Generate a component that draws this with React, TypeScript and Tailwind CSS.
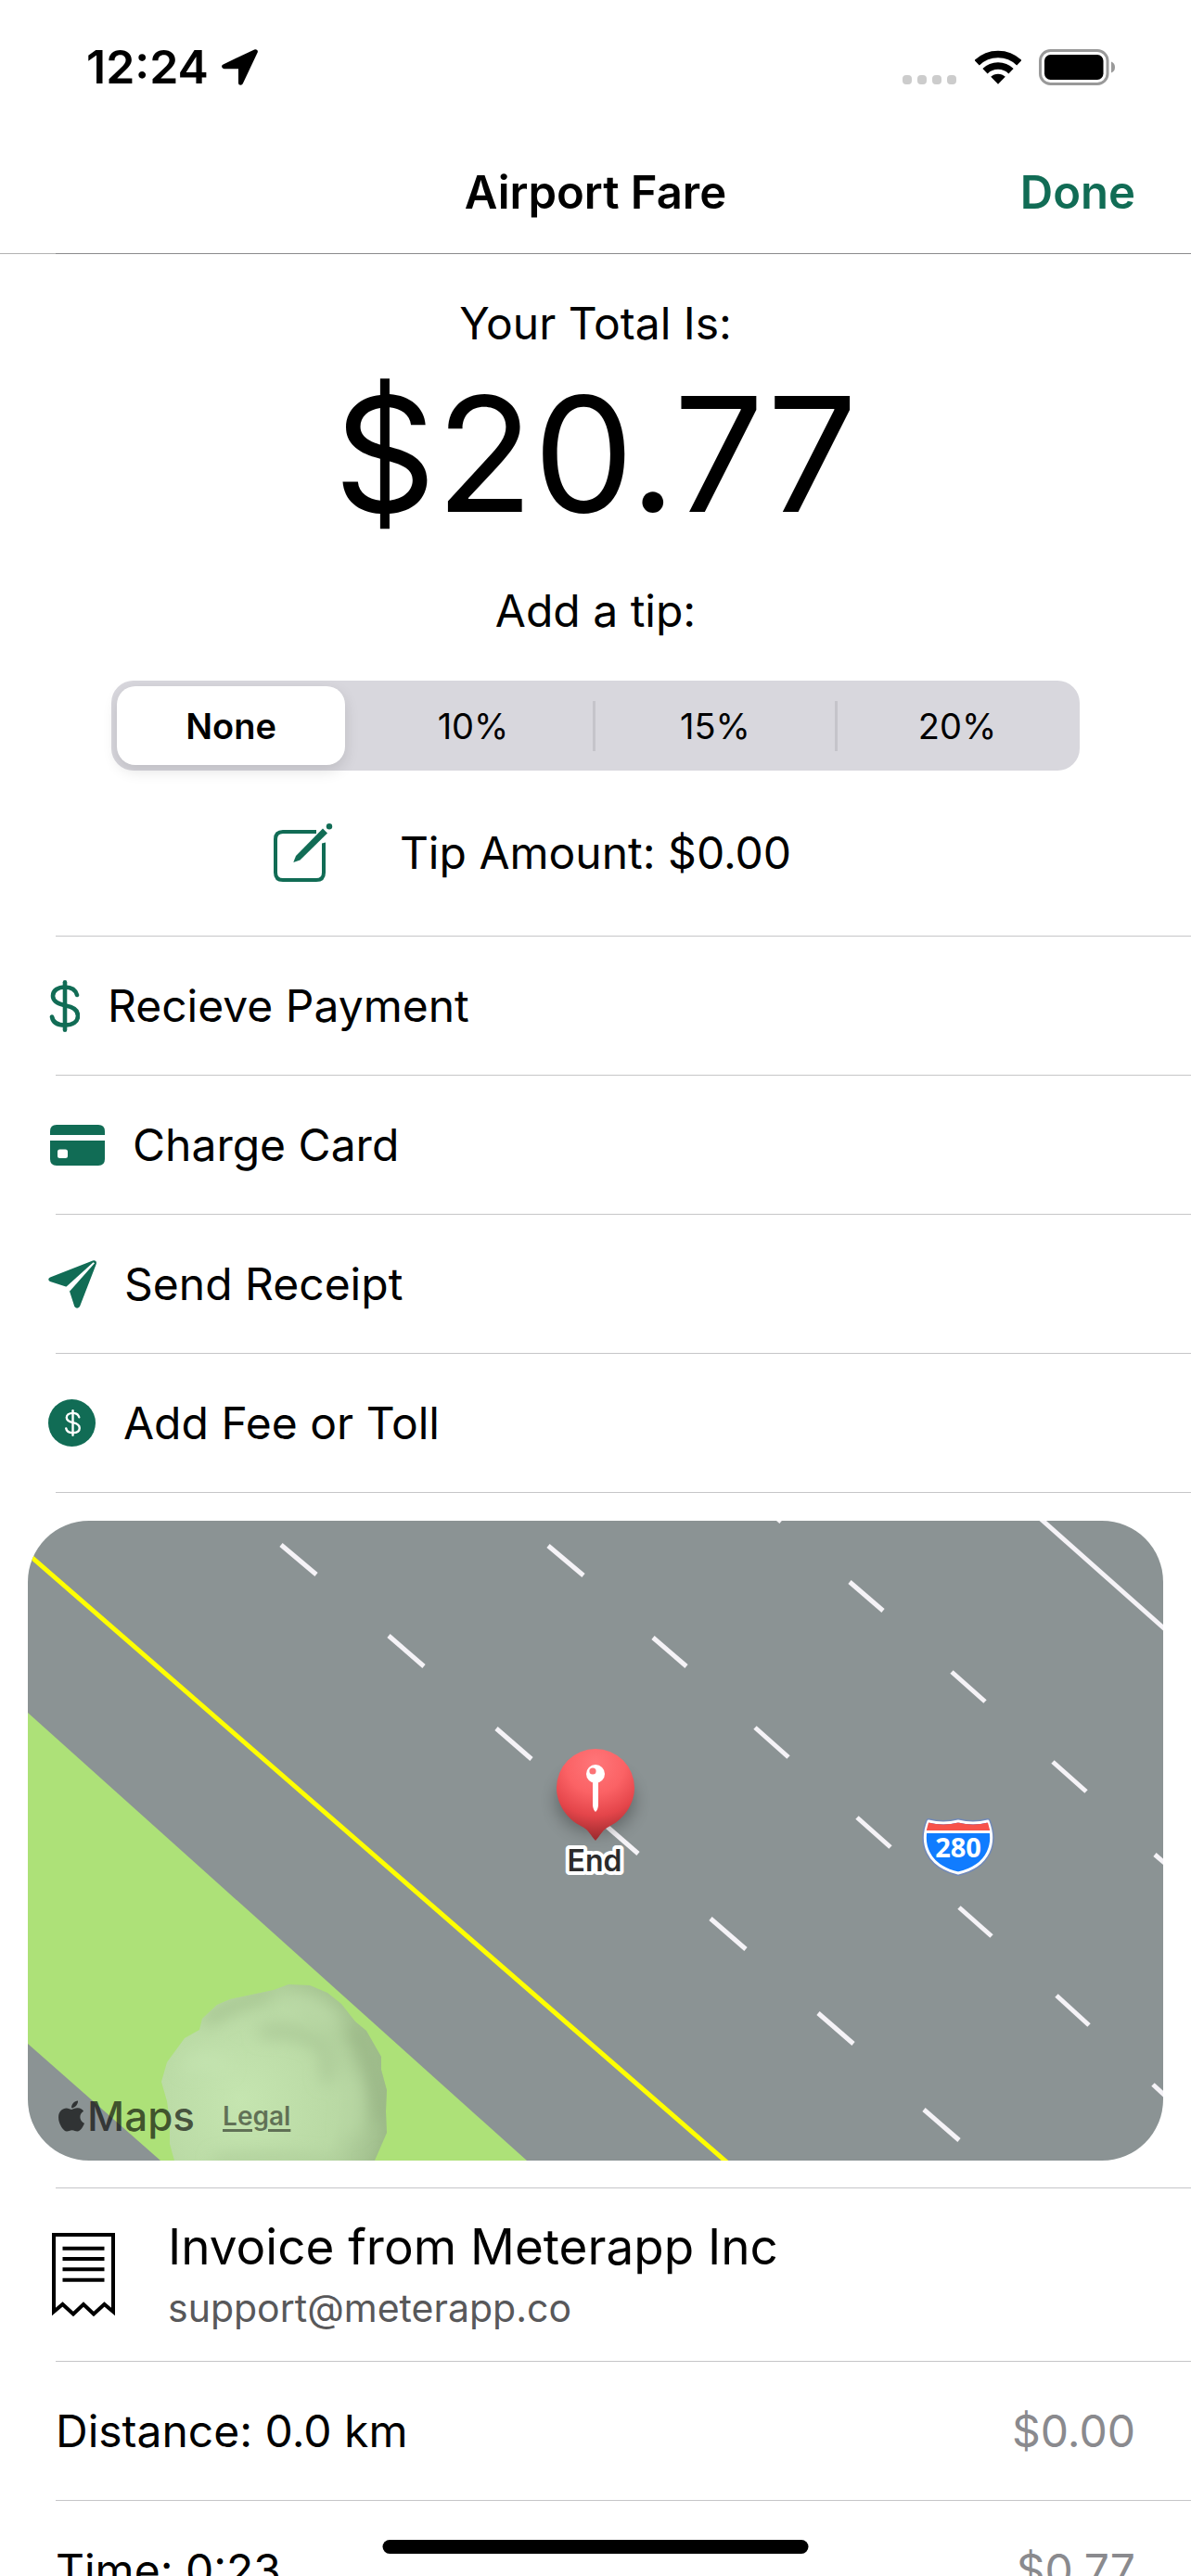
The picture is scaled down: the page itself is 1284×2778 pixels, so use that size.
import { useState } from "react";
import type { ReactNode } from "react";
import { FaApple } from "react-icons/fa";

const tips = [
  { label: "None", rate: 0 },
  { label: "10%", rate: 0.1 },
  { label: "15%", rate: 0.15 },
  { label: "20%", rate: 0.2 },
];

const fare = 20.77;

const laneMarks = [
  [273, 26, 311, 58],
  [389, 124, 427, 157],
  [505, 224, 543, 257],
  [620, 326, 658, 359],
  [736, 429, 774, 462],
  [852, 531, 890, 564],
  [966, 635, 1004, 668],
  [561, 27, 599, 59],
  [674, 126, 710, 157],
  [784, 223, 820, 255],
  [894, 320, 930, 352],
  [1004, 417, 1039, 448],
  [1109, 512, 1144, 544],
  [1213, 608, 1249, 641],
  [776, -30, 812, 1],
  [886, 66, 922, 97],
  [996, 163, 1032, 195],
  [1105, 260, 1141, 292],
  [1215, 360, 1251, 391],
];

const DollarIcon = ({ className }: { className?: string }) => (
  <svg viewBox="0 0 34 56" className={className} fill="none" stroke="currentColor" strokeWidth="4.600" strokeLinecap="round">
    <path d="M18 2.300V53.700" />
    <path d="M31 16C29.500 10.500 25 7.500 18 7.500C10.500 7.500 5 11 5 17C5 23 10 25.500 18 27.300C26.500 29.200 32 31.500 32 38.500C32 45 26.500 48.500 18 48.500C10 48.500 5 45.500 4 39.500" />
  </svg>
);

const CardIcon = () => (
  <svg viewBox="0 0 61 44" className="h-11 w-[61px]" fill="currentColor">
    <path d="M2 11V7Q2 0 9 0H54Q61 0 61 7V11Z" />
    <path
      fillRule="evenodd"
      d="M2 17H61V37Q61 44 54 44H9Q2 44 2 37ZM12.500 26.500Q10 26.500 10 29V33.500Q10 36 12.500 36H18.500Q21 36 21 33.500V29Q21 26.500 18.500 26.500Z"
    />
  </svg>
);

const PlaneIcon = () => (
  <svg viewBox="0 0 52 52" className="size-13" fill="currentColor">
    <path d="M2 18.500L48 .4Q50 -.2 51.200 .9Q52.500 2.200 51.600 4.500L34 50Q31 53.500 28.300 50L23 33.500L20.500 29L2 23Q-1.500 20.700 2 18.500Z" />
    <path d="M18.500 29.500L48.600 2.300L50 3.300L23.200 33.500Z" fill="white" />
  </svg>
);

const CoinIcon = () => (
  <span className="flex size-[51px] items-center justify-center rounded-full bg-[#116c55]">
    <DollarIcon className="h-[29px] w-[18px] text-white" />
  </span>
);

const EditIcon = () => (
  <svg viewBox="0 0 64 64" className="size-16" fill="none" stroke="currentColor" strokeWidth="4">
    <path d="M46 9H10Q2 9 2 17V53Q2 61 10 61H46Q54 61 54 53V18" />
    <path d="M44 13.500L58 -.5V20L50 22Z" fill="white" stroke="none" />
    <path d="M53 5.500L58 10.500L28.500 39.500L21.300 42L24 35Z" fill="currentColor" stroke="none" />
    <circle cx="60" cy="3.300" r="3.200" fill="currentColor" stroke="none" />
  </svg>
);

const ReceiptIcon = () => (
  <svg viewBox="0 0 68 90" className="h-[90px] w-[68px]" fill="none" stroke="black" strokeWidth="4">
    <path d="M2 85V2H66V85L56.500 77L45 87.500L34 77L23 87.500L11.500 77Z" strokeMiterlimit="10" />
    <path d="M11.500 16.700H56.500M11.500 28H56.500M11.500 39.300H56.500M11.500 50.700H56.500" />
  </svg>
);

const Separator = () => <div className="ml-15 h-px bg-[#c6c6c8]" />;

const StatusBar = () => (
  <div className="flex h-[142px] items-center justify-between pt-0.5 pr-[82px] pl-[93px]">
    <div className="flex items-center gap-[14px]">
      <span className="text-[50px] leading-[60px] font-semibold">12:24</span>
      <svg viewBox="0 0 39 39" className="size-[39px]" strokeWidth="5" strokeLinejoin="round" stroke="black">
        <path d="M36.300 2.700L2.700 18.700H20.500V36.300Z" />
      </svg>
    </div>
    <div className="flex items-center">
      <svg viewBox="0 0 58 37" className="mr-5 h-[37px] w-[58px]" fill="#cccccc">
        <rect x="0" y="27" width="10" height="10" rx="4" />
        <rect x="16" y="27" width="10" height="10" rx="4" />
        <rect x="32" y="27" width="10" height="10" rx="4" />
        <rect x="48" y="27" width="10" height="10" rx="4" />
      </svg>
      <svg viewBox="0 0 50 37" className="mr-[19px] h-[37px] w-[50px]" fill="none" stroke="black" strokeWidth="7.500">
        <path d="M2.200 13.700A32.700 32.700 0 0 1 47.800 13.700" />
        <path d="M11 22.700A20 20 0 0 1 39 22.700" />
        <path d="M25 36.800L17.200 28.800A11.200 11.200 0 0 1 32.800 28.800Z" fill="black" stroke="none" />
      </svg>
      <svg viewBox="0 0 82 39" className="h-[39px] w-[82px]">
        <rect x="1.500" y="1.500" width="72.500" height="36" rx="11" fill="none" stroke="#999999" strokeWidth="3" />
        <rect x="6" y="6" width="63.500" height="27" rx="6.500" />
        <path d="M78 13.500Q82 15 82 19.500Q82 24 78 25.500Z" fill="#999999" />
      </svg>
    </div>
  </div>
);

interface ActionRowProps {
  icon: ReactNode;
  label: string;
}

const ActionRow = ({ icon, label }: ActionRowProps) => {
  return (
    <li>
      <button className="flex h-[149px] w-full items-center gap-[30px] pl-13 text-left">
        <span className="text-[#116c55]">{icon}</span>
        {label}
      </button>
      <Separator />
    </li>
  );
};

const FareMap = () => {
  return (
    <div className="relative mx-[30px] mt-[30px] mb-[29px] overflow-hidden rounded-[66px]">
      <svg viewBox="0 0 1224 690" className="block w-full">
        <defs>
          <radialGradient id="pin" gradientUnits="userSpaceOnUse" cx="612" cy="262" r="80">
            <stop offset="0" stopColor="#ff7679" />
            <stop offset="0.4" stopColor="#fb6265" />
            <stop offset="0.7" stopColor="#e4454a" />
            <stop offset="1" stopColor="#a02c30" />
          </radialGradient>
          <radialGradient id="tree" cx="0.36" cy="0.5" r="0.7">
            <stop offset="0" stopColor="#c5e5b0" />
            <stop offset="0.6" stopColor="#b9d9a4" />
            <stop offset="0.85" stopColor="#a5c391" />
            <stop offset="1" stopColor="#93b07f" />
          </radialGradient>
          <filter id="soft" x="-50%" y="-50%" width="200%" height="200%">
            <feGaussianBlur stdDeviation="9" />
          </filter>
          <clipPath id="treeClip">
            <path d="M281 500L304 501L323 509L338 521L353 540L365 550L381 578V592L387 614L386 637L387 660L374 690H158L153 672V647L150 626L144 605L150 584L169 558L185 549L188 537L204 522L218 516L265 506Z" />
          </clipPath>
        </defs>
        <rect width="1224" height="690" fill="#8b9394" />
        <path d="M0 207L538 690H143L0 564Z" fill="#ade178" />
        <g clipPath="url(#treeClip)">
          <rect x="140" y="495" width="250" height="260" fill="url(#tree)" />
          <g filter="url(#soft)" fill="none" strokeWidth="12">
            <path d="M190 540Q215 522 262 510" stroke="#a3c18e" />
            <path d="M250 552Q285 545 318 565Q328 585 322 605" stroke="#a8c694" />
            <path d="M275 522Q315 517 330 545" stroke="#bddca9" />
            <path d="M350 545Q378 590 382 650" stroke="#96b383" />
            <path d="M345 600Q355 630 345 660" stroke="#bad9a5" />
            <path d="M170 590Q190 575 215 590" stroke="#c5e5b1" />
            <path d="M200 692Q270 684 330 694" stroke="#aecd9a" />
          </g>
        </g>
        <path d="M-10 27L763 700" stroke="#ffff00" strokeWidth="5" />
        <g stroke="#f5f3f7" strokeWidth="5">
          <path d="M1083 -10L1235 125" />
          {laneMarks.map(([x1, y1, x2, y2]) => (
            <line key={`${x1}-${y1}`} x1={x1} y1={y1} x2={x2} y2={y2} />
          ))}
        </g>
        <ellipse cx="612" cy="302" rx="42" ry="34" fill="black" opacity="0.3" filter="url(#soft)" />
        <path
          d="M612 246A42 42 0 0 1 654 288C654 306 642 322 628 329C619 333 617 340 612 345C607 340 605 333 596 329C582 322 570 306 570 288A42 42 0 0 1 612 246Z"
          fill="url(#pin)"
        />
        <path d="M609 281H615V307Q614.500 312 612 314Q609.500 312 609 307Z" fill="white" />
        <circle cx="612" cy="273" r="10" fill="white" />
        <circle cx="609" cy="270" r="3.600" fill="#fb7376" />
        <text
          x="611"
          y="378"
          textAnchor="middle"
          className="fill-[#2b2b2b] stroke-white font-['Inter'] text-[32px] font-semibold"
          strokeWidth="8"
          strokeLinejoin="round"
          paintOrder="stroke"
        >
          End
        </text>
        <path
          d="M971 324Q987 328 1003 324Q1019 328 1035 324C1044 347 1037 372 1003 380C969 372 962 347 971 324Z"
          fill="white"
          stroke="#7189b8"
          strokeWidth="6"
          strokeLinejoin="round"
        />
        <path
          d="M971 324Q987 328 1003 324Q1019 328 1035 324C1044 347 1037 372 1003 380C969 372 962 347 971 324Z"
          fill="#107cff"
          stroke="white"
          strokeWidth="3"
          strokeLinejoin="round"
        />
        <path d="M971 325.500Q987 329.500 1003 325.500Q1019 329.500 1035 325.500L1037.500 335H968.500Z" fill="#f7524a" />
        <path d="M968 335.500H1038" stroke="white" strokeWidth="3" />
        <text x="1003" y="363" textAnchor="middle" className="fill-white font-['Open_Sans'] text-[29px] font-bold">
          280
        </text>
      </svg>
      <div className="absolute bottom-[18px] left-[30px] flex items-center text-black/65">
        <FaApple className="h-[38px] w-[34px]" />
        <span className="text-[44px] leading-[60px] font-medium">Maps</span>
        <a
          href="#legal"
          className="ml-[30px] text-[28px] font-semibold text-black/50 underline decoration-3 underline-offset-4"
        >
          Legal
        </a>
      </div>
    </div>
  );
};

interface FareRowProps {
  label: string;
  amount: string;
}

const FareRow = ({ label, amount }: FareRowProps) => {
  return (
    <>
      <div className="flex h-[149px] items-center justify-between px-15">
        <dt>{label}</dt>
        <dd className="text-[#8a8a8e]">{amount}</dd>
      </div>
      <Separator />
    </>
  );
};

const App = () => {
  const [tip, setTip] = useState(0);

  return (
    <div className="flex h-screen flex-col overflow-hidden bg-white font-['Inter',sans-serif] text-[48px] leading-[60px] text-black">
      <header className="shrink-0">
        <StatusBar />
        <div className="grid h-[131px] grid-cols-[1fr_auto_1fr] items-center px-15 text-[49px] font-semibold">
          <h1 className="col-start-2">Airport Fare</h1>
          <button className="justify-self-end text-[#116c55]">Done</button>
        </div>
        <div className="flex h-px">
          <div className="w-15 bg-[#b2b2b2]" />
          <div className="flex-1 bg-[#8a8a8c]" />
        </div>
      </header>

      <main className="min-h-0 flex-1 overflow-hidden">
        <section className="pt-[45px] pb-[57px] text-center">
          <h2>Your Total Is:</h2>
          <p className="mt-5 text-[172px] leading-[180px]">${fare.toFixed(2)}</p>
          <fieldset className="mt-[50px]">
            <legend className="w-full">Add a tip:</legend>
            <div className="mx-[120px] mt-[45px] grid h-[97px] grid-cols-4 rounded-3xl bg-[#d8d7dd] text-[38px]">
              {tips.map(({ label, rate }, i) => (
                <label key={label} className="flex items-center py-1.5 pl-1.5">
                  <input
                    type="radio"
                    name="tip"
                    className="peer sr-only"
                    checked={tip === rate}
                    onChange={() => setTip(rate)}
                  />
                  <span className="flex h-full flex-1 items-center justify-center rounded-[20px] peer-checked:bg-white peer-checked:font-semibold peer-checked:shadow-[0_6px_16px_rgba(0,0,0,0.12)]">
                    {label}
                  </span>
                  <span className={i === 1 || i === 2 ? "ml-1.5 h-[54px] w-[3px] bg-[#c5c4ca]" : "ml-1.5 w-[3px]"} />
                </label>
              ))}
            </div>
          </fieldset>
          <div className="mt-[57px] grid grid-cols-[1fr_auto_1fr] items-center">
            <button aria-label="Edit tip" className="mr-[72px] justify-self-end text-[#116c55]">
              <EditIcon />
            </button>
            <p>Tip Amount: ${(fare * tip).toFixed(2)}</p>
          </div>
        </section>
        <Separator />

        <ul>
          <ActionRow icon={<DollarIcon className="h-14 w-[34px]" />} label="Recieve Payment" />
          <ActionRow icon={<CardIcon />} label="Charge Card" />
          <ActionRow icon={<PlaneIcon />} label="Send Receipt" />
          <ActionRow icon={<CoinIcon />} label="Add Fee or Toll" />
        </ul>

        <FareMap />
        <Separator />

        <section className="flex h-[186px] items-center gap-[57px] pl-14">
          <ReceiptIcon />
          <div>
            <h2 className="text-[53px] leading-[72px]">Invoice from Meterapp Inc</h2>
            <p className="text-[41px] text-[#58585a]">support@meterapp.co</p>
          </div>
        </section>
        <Separator />

        <dl>
          <FareRow label="Distance: 0.0 km" amount="$0.00" />
          <FareRow label="Time: 0:23" amount="$0.77" />
        </dl>
      </main>

      <div className="fixed bottom-6 left-1/2 h-[15px] w-[459px] -translate-x-1/2 rounded-full bg-black" />
    </div>
  );
};

export default App;
